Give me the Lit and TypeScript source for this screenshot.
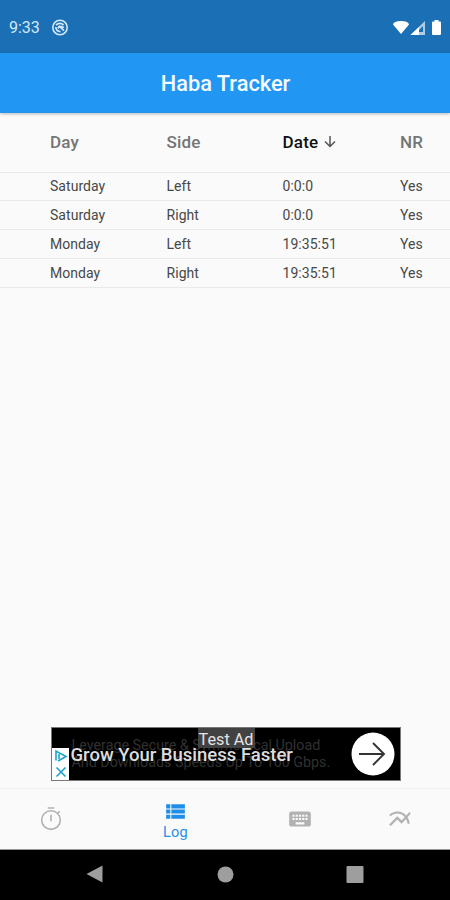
import { LitElement, html, css, svg } from "lit";
import { customElement } from "lit/decorators.js";

interface Entry { day: string; side: string; date: string; nr: string; }

const entries: Entry[] = [
  { day: "Saturday", side: "Left", date: "0:0:0", nr: "Yes" },
  { day: "Saturday", side: "Right", date: "0:0:0", nr: "Yes" },
  { day: "Monday", side: "Left", date: "19:35:51", nr: "Yes" },
  { day: "Monday", side: "Right", date: "19:35:51", nr: "Yes" },
];

const timer = svg`<path fill="none" stroke="currentColor" stroke-width="1.500" d="M9 1.800h6M12 8v6M18.300 6.500l1.700-1.500"/><circle cx="12" cy="13" r="8.600" fill="none" stroke="currentColor" stroke-width="1.500"/>`;
const list = svg`<path d="M3 9h4V5H3v4zm0 5h4v-4H3v4zm5 0h13v-4H8v4zm0 5h13v-4H8v4zM8 5v4h13V5H8zM3 19h4v-4H3v4z"/>`;
const keyboard = svg`<path d="M20 5H4c-1.1 0-1.99.9-1.99 2L2 17c0 1.1.9 2 2 2h16c1.100 0 2-.9 2-2V7c0-1.100-.9-2-2-2zm-9 3h2v2h-2V8zm0 3h2v2h-2v-2zM8 8h2v2H8V8zm0 3h2v2H8v-2zm-1 2H5v-2h2v2zm0-3H5V8h2v2zm9 7H8v-2h8v2zm0-4h-2v-2h2v2zm0-3h-2V8h2v2zm3 3h-2v-2h2v2zm0-3h-2V8h2v2z"/>`;
const chart = svg`<path d="M22 6.920l-1.410-1.410-2.850 3.210C15.680 6.400 12.830 5 9.610 5 6.720 5 4.070 6.160 2 8l1.420 1.420C5.120 7.930 7.270 7 9.610 7c2.740 0 5.090 1.260 6.770 3.240l-2.880 3.240-4-4L2 16.990l1.500 1.500 6-6.010 4 4 4.050-4.550c.75 1.350 1.250 2.900 1.440 4.550H21c-.22-2.300-.95-4.390-2.040-6.140L22 6.920z"/>`;

@customElement("app-root")
export class AppRoot extends LitElement {
  static styles = css`
    :host { display: flex; flex-direction: column; width: 450px; height: 900px; background: #fafafa; font-family: Roboto, sans-serif; overflow: hidden; }
    * { box-sizing: border-box; }
    svg { display: block; fill: currentColor; flex: none; }
    .status { height: 53px; flex: none; background: #1b70b5; color: #d3e7f8; display: flex; align-items: center; padding: 2px 8px 0 9px; font-size: 16px; letter-spacing: 0; }
    .alert { margin-left: 11px; }
    .signals { margin-left: auto; color: #fff; }
    .bar { height: 60px; flex: none; background: #2196f3; color: #f5faff; display: flex; align-items: center; justify-content: center; padding: 1px 0 0 1px; font-size: 21.800px; font-weight: 500; box-shadow: 0 1px 3px #0004; z-index: 1; }
    .row { display: grid; grid-template-columns: 116.500px 116px 117.500px 1fr; padding-left: 50px; height: 28.800px; align-items: center; border-bottom: 1px solid #e9e9e9; font-size: 14px; color: #484848; letter-spacing: .05px; }
    .head { height: 59.500px; font-size: 17px; font-weight: 500; color: #757575; letter-spacing: .2px; }
    .sorted { color: #111; display: flex; align-items: center; gap: 6px; }
    .arrow { color: #555; }
    .fill { flex: 1; }
    .ad { position: relative; width: 350px; height: 54px; flex: none; margin: 0 0 7px 50.500px; background: #000; border: 1px solid #777; display: flex; align-items: center; overflow: hidden; }
    .copy { position: absolute; left: 20px; top: 9px; font-size: 14.300px; line-height: 17px; color: #303030; white-space: nowrap; }
    .title { position: relative; margin: 1px 0 0 19px; color: #ddd; font-size: 18.500px; font-weight: 500; white-space: nowrap; }
    .test { position: absolute; left: 146px; top: 0; width: 57px; height: 20px; background: #424242; color: #e4e4e4; font-size: 16.200px; line-height: 23px; text-align: center; white-space: nowrap; }
    .choices { position: absolute; left: 0; bottom: 0; background: #fff; color: #1ba3ca; }
    .go { position: absolute; right: 5px; top: 4px; }
    .nav { height: 62px; flex: none; border-top: 1px solid #eee; border-bottom: 1px solid #999; display: grid; grid-template-columns: 101px 149px 100px 100px; align-items: center; justify-items: center; color: #b2b2b2; }
    .log { color: #1e8ee8; display: flex; flex-direction: column; align-items: center; font-size: 14.500px; line-height: 18px; letter-spacing: .2px; padding-top: 2px; }
    .system { height: 50px; flex: none; background: #000; color: #9e9e9e; }
  `;

  icon(shape: unknown, size: number) {
    return html`<svg width=${size} height=${size} viewBox="0 0 24 24">${shape}</svg>`;
  }

  render() {
    return html`
      <div class="status">
        <span>9:33</span>
        <svg class="alert" width="18" height="18" viewBox="0 0 18 18"><circle cx="9" cy="8.500" r="7.200" fill="none" stroke="currentColor" stroke-width="1.600"/><path fill="none" stroke="currentColor" stroke-width="1.700" d="M5 6Q9 2.800 12.500 6M4.800 8Q5 12.500 9.500 12.700M6.800 9.500l1.500-2.300 4.700 4.500M9.500 7.200l3.500 1.300"/></svg>
        <svg class="signals" width="50" height="18" viewBox="0 0 50 18"><path d="M1 5.500Q1.500 2 9 2T17 5.500L9 15z"/><path opacity=".65" d="M33 2v14H18.500z"/><path d="M27 8v8h-8.500z"/><path fill="#1b70b5" d="M31 7v6h-4v-2z"/><path d="M42.500 2.500V1h4v1.500H48q1 0 1 1V15q0 1-1 1h-7q-1 0-1-1V3.500q0-1 1-1z"/></svg>
      </div>
      <div class="bar">Haba Tracker</div>
      <div class="row head">
        <span>Day</span><span>Side</span>
        <span class="sorted">Date<svg class="arrow" width="12" height="15" viewBox="0 0 12 15"><path fill="none" stroke="currentColor" stroke-width="1.500" d="M6 1v10.500M1 6.500l5 5 5-5"/></svg></span>
        <span>NR</span>
      </div>
      ${entries.map((e) => html`<div class="row"><span>${e.day}</span><span>${e.side}</span><span>${e.date}</span><span>${e.nr}</span></div>`)}
      <div class="fill"></div>
      <div class="ad">
        <div class="copy">Leverage Secure &amp; Symmetrical Upload<br>And Downloads Speeds Up To 100 Gbps.</div>
        <div class="title">Grow Your Business Faster</div>
        <div class="test">Test Ad</div>
        <svg class="choices" width="17" height="32" viewBox="0 0 17 32"><path fill="none" stroke="currentColor" stroke-width="1.600" d="M4 12.500V3l10 5.500-8 4.500M7 6v5M4.500 19.500l9 9M13.500 19.500l-9 9"/></svg>
        <svg class="go" width="44" height="44" viewBox="0 0 44 44"><circle cx="22" cy="22" r="21.500" fill="#fff"/><path fill="none" stroke="#333" stroke-width="1.900" d="M8 22h25M22 11l11 11-11 11"/></svg>
      </div>
      <div class="nav">
        ${this.icon(timer, 26)}
        <div class="log">${this.icon(list, 25)}<span>Log</span></div>
        ${this.icon(keyboard, 26)}
        ${this.icon(chart, 26)}
      </div>
      <div class="system"><svg width="450" height="50" viewBox="0 0 450 50"><path d="M86.500 24L102.500 15.500v17z"/><circle cx="225.500" cy="24.500" r="8"/><rect x="346.500" y="16" width="17" height="17" rx="1"/></svg></div>
    `;
  }
}
